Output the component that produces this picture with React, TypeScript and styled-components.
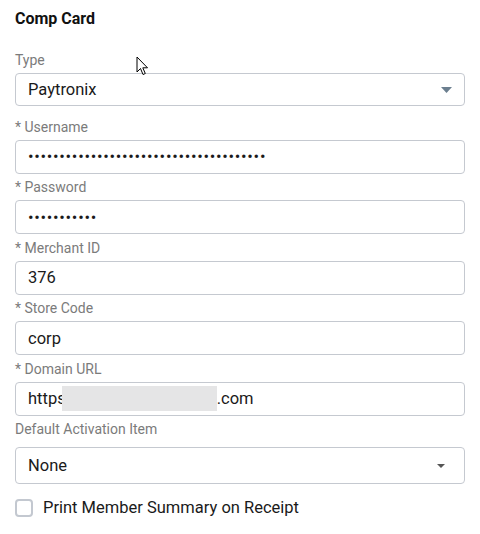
import React from "react";
import styled, { createGlobalStyle } from "styled-components";

const Global = createGlobalStyle`
  html, body { margin: 0; padding: 0; background: #ffffff; }
  body { font-family: Roboto, "Noto Sans", "Liberation Sans", sans-serif; }
  * { box-sizing: border-box; }
`;

const Panel = styled.div`
  position: relative;
  width: 480px;
  height: 534px;
  padding: 9px 15px 0 15px;
  display: flex;
  flex-direction: column;
`;

const Title = styled.h3`
  margin: 0 0 21px 0;
  font-size: 16px;
  line-height: 20px;
  font-weight: 700;
  color: #111111;
`;

const Field = styled.div<{ $gap?: number }>`
  display: flex;
  flex-direction: column;
  margin-bottom: ${(p) => (p.$gap ?? 3.5)}px;
`;

const Label = styled.label<{ $space?: number }>`
  font-size: 14px;
  line-height: 20px;
  color: #7b7b7b;
  margin-bottom: ${(p) => (p.$space ?? 3)}px;
`;

const Box = styled.div<{ $h?: number }>`
  position: relative;
  height: ${(p) => p.$h ?? 34}px;
  width: 450px;
  border: 1px solid #c5c9d0;
  border-radius: 4px;
  display: flex;
  align-items: center;
  padding: 0 12px;
  font-size: 16.5px;
  color: #1a1a1a;
  background: #fff;
`;

const Input = styled.input<{ $secret?: boolean }>`
  border: none;
  outline: none;
  background: transparent;
  font: inherit;
  color: inherit;
  width: 100%;
  padding: 0;
  letter-spacing: ${(p) => (p.$secret ? "0.7px" : "normal")};
`;

const Value = styled.span`
  flex: 1;
  display: flex;
  align-items: center;
  white-space: pre;
`;

/* grey block hiding the host part of the address */
const Masked = styled.span`
  display: inline-block;
  width: 155px;
  height: 25px;
  margin-left: -4px;
  background: #e5e5e6;
`;

const Caret = styled.svg<{ $inset?: number }>`
  flex: none;
  margin-right: ${(p) => p.$inset ?? 0}px;
`;

const CheckRow = styled.label`
  display: flex;
  align-items: center;
  gap: 10px;
  margin-top: 14px;
  font-size: 16.5px;
  color: #1a1a1a;
`;

const CheckBox = styled.span`
  width: 18px;
  height: 18px;
  border: 2px solid #c3c8d0;
  border-radius: 4px;
  background: #fff;
`;

const Pointer = styled.svg`
  position: absolute;
  left: 136px;
  top: 56px;
`;

export default function App() {
  return (
    <>
      <Global />
      <Panel>
        <Title>Comp Card</Title>

        <Field $gap={10.5}>
          <Label>Type</Label>
          <Box $h={33}>
            <Value>Paytronix</Value>
            <Caret width="11" height="6" viewBox="0 0 11 6">
              <path d="M0 0 L11 0 L5.5 6 Z" fill="#6b7f8f" />
            </Caret>
          </Box>
        </Field>

        <Field>
          <Label>* Username</Label>
          <Box>
            <Input type="password" $secret readOnly value={"x".repeat(38)} />
          </Box>
        </Field>

        <Field>
          <Label>* Password</Label>
          <Box>
            <Input type="password" $secret readOnly value={"x".repeat(11)} />
          </Box>
        </Field>

        <Field>
          <Label>* Merchant ID</Label>
          <Box>
            <Input readOnly value="376" />
          </Box>
        </Field>

        <Field>
          <Label>* Store Code</Label>
          <Box>
            <Input readOnly value="corp" />
          </Box>
        </Field>

        <Field>
          <Label>* Domain URL</Label>
          <Box>
            <Value>
              https
              <Masked />
              .com
            </Value>
          </Box>
        </Field>

        <Field $gap={0}>
          <Label $space={8}>Default Activation Item</Label>
          <Box $h={37}>
            <Value>None</Value>
            <Caret $inset={7} width="8" height="4" viewBox="0 0 8 4">
              <path d="M0 0 L8 0 L4 4 Z" fill="#555" />
            </Caret>
          </Box>
        </Field>

        <CheckRow>
          <CheckBox />
          Print Member Summary on Receipt
        </CheckRow>

        <Pointer width="14" height="21" viewBox="0 0 14 21">
          <path
            d="M1 1 L1 16 L4.5 12.5 L7 18.5 L9.3 17.5 L6.8 11.8 L11.5 11.8 Z"
            fill="#fff"
            stroke="#000"
            strokeWidth="1"
            strokeLinejoin="round"
          />
        </Pointer>
      </Panel>
    </>
  );
}
